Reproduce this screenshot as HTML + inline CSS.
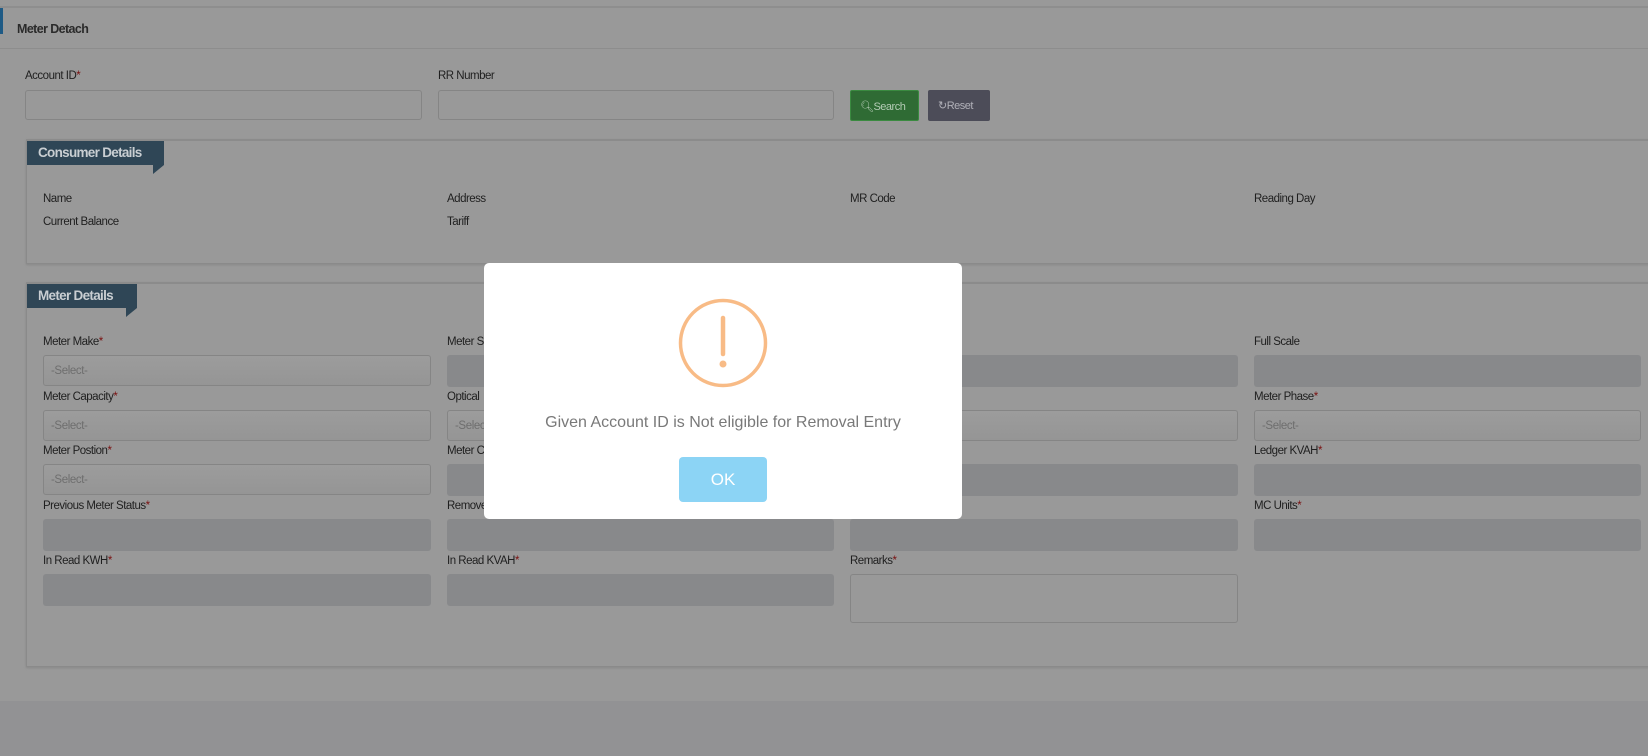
<!DOCTYPE html>
<html><head><meta charset="utf-8"><style>
*{box-sizing:border-box;margin:0;padding:0}
body{width:1648px;height:756px;overflow:hidden;background:#929294;font-family:"Liberation Sans",sans-serif;font-size:12px;color:#1e1e1e;position:relative}
.a{position:absolute}
.lbl{position:absolute;font-size:11.5px;color:#1f1f1f;letter-spacing:-0.5px;margin-top:2px}
.lbl b{color:#7a1010;font-weight:normal}
.in{position:absolute;height:31px;border:1px solid #858585;border-radius:3px;background:#999}
.ro{position:absolute;height:32px;border-radius:3px;background:#88898b}
.sel{position:absolute;height:31px;border:1px solid #858585;border-radius:3px;background:linear-gradient(#9c9c9c,#959595);color:#6e6e6e;font-size:11.5px;letter-spacing:-0.4px;padding:9px 7px}
.tab{position:absolute;background:#2f4656;color:#c9ced2;font-weight:bold;font-size:13.5px;padding:4px 11px;letter-spacing:-0.7px}
</style></head><body>
<div class="a" style="left:0;top:0;width:1648px;height:701px;background:#999"></div>
<div class="a" style="left:0;top:6px;width:1648px;height:2px;background:#8e8e8e"></div>
<div class="a" style="left:0;top:8px;width:3px;height:26px;background:#1e5a85"></div>
<div class="a" style="left:17px;top:22px;font-size:12.5px;font-weight:bold;color:#2a2a2a;letter-spacing:-0.6px">Meter Detach</div>
<div class="a" style="left:0;top:48px;width:1648px;height:1px;background:#8d8d8d"></div>

<div class="lbl" style="left:25px;top:68px">Account ID<b>*</b></div>
<div class="lbl" style="left:438px;top:68px">RR Number</div>
<div class="in" style="left:25px;top:90px;width:397px;height:30px"></div>
<div class="in" style="left:438px;top:90px;width:396px;height:30px"></div>
<div class="a" style="left:850px;top:90px;width:69px;height:31px;background:#2f6b34;border:1px solid #3a8a40;border-radius:2px;color:#b5ccb6;padding:9px 0 0 9px;font-size:11px;letter-spacing:-0.5px">&#x1F50D;&#xFE0E;Search</div>
<div class="a" style="left:928px;top:90px;width:62px;height:31px;background:#4c4c58;border-radius:2px;color:#b0b0b8;padding:9px 0 0 10px;font-size:11px;letter-spacing:-0.5px">↻Reset</div>

<div class="a" style="left:26px;top:139px;width:1630px;height:125px;border:1px solid #8a8a8a;border-top:2px solid #8b8b8b;box-shadow:0 1px 2px #888"></div>
<div class="tab" style="left:27px;top:141px;width:137px;height:24px;padding-top:4px">Consumer Details</div>
<div class="a" style="left:153px;top:165px;width:0;height:0;border-left:11px solid #2f4656;border-bottom:9px solid transparent"></div>
<div class="lbl" style="left:43px;top:191px">Name</div>
<div class="lbl" style="left:447px;top:191px">Address</div>
<div class="lbl" style="left:850px;top:191px">MR Code</div>
<div class="lbl" style="left:1254px;top:191px">Reading Day</div>
<div class="lbl" style="left:43px;top:214px">Current Balance</div>
<div class="lbl" style="left:447px;top:214px">Tariff</div>

<div class="a" style="left:26px;top:282px;width:1630px;height:385px;border:1px solid #8a8a8a;border-top:2px solid #8b8b8b;box-shadow:0 1px 2px #888"></div>
<div class="tab" style="left:27px;top:284px;width:110px;height:24px;padding-top:4px">Meter Details</div>
<div class="a" style="left:126px;top:308px;width:0;height:0;border-left:11px solid #2f4656;border-bottom:9px solid transparent"></div>

<div class="lbl" style="left:43px;top:334px">Meter Make<b>*</b></div>
<div class="lbl" style="left:447px;top:334px">Meter S</div>
<div class="lbl" style="left:1254px;top:334px">Full Scale</div>
<div class="sel" style="left:43px;top:355px;width:388px">-Select-</div>
<div class="ro" style="left:447px;top:355px;width:387px"></div>
<div class="ro" style="left:850px;top:355px;width:388px"></div>
<div class="ro" style="left:1254px;top:355px;width:387px"></div>

<div class="lbl" style="left:43px;top:389px">Meter Capacity<b>*</b></div>
<div class="lbl" style="left:447px;top:389px">Optical</div>
<div class="lbl" style="left:1254px;top:389px">Meter Phase<b>*</b></div>
<div class="sel" style="left:43px;top:410px;width:388px">-Select-</div>
<div class="sel" style="left:447px;top:410px;width:387px">-Select-</div>
<div class="sel" style="left:850px;top:410px;width:388px"></div>
<div class="sel" style="left:1254px;top:410px;width:387px">-Select-</div>

<div class="lbl" style="left:43px;top:443px">Meter Postion<b>*</b></div>
<div class="lbl" style="left:447px;top:443px">Meter C</div>
<div class="lbl" style="left:1254px;top:443px">Ledger KVAH<b>*</b></div>
<div class="sel" style="left:43px;top:464px;width:388px">-Select-</div>
<div class="ro" style="left:447px;top:464px;width:387px"></div>
<div class="ro" style="left:850px;top:464px;width:388px"></div>
<div class="ro" style="left:1254px;top:464px;width:387px"></div>

<div class="lbl" style="left:43px;top:498px">Previous Meter Status<b>*</b></div>
<div class="lbl" style="left:447px;top:498px">Remove</div>
<div class="lbl" style="left:1254px;top:498px">MC Units<b>*</b></div>
<div class="ro" style="left:43px;top:519px;width:388px"></div>
<div class="ro" style="left:447px;top:519px;width:387px"></div>
<div class="ro" style="left:850px;top:519px;width:388px"></div>
<div class="ro" style="left:1254px;top:519px;width:387px"></div>

<div class="lbl" style="left:43px;top:553px">In Read KWH<b>*</b></div>
<div class="lbl" style="left:447px;top:553px">In Read KVAH<b>*</b></div>
<div class="lbl" style="left:850px;top:553px">Remarks<b>*</b></div>
<div class="ro" style="left:43px;top:574px;width:388px"></div>
<div class="ro" style="left:447px;top:574px;width:387px"></div>
<div class="in" style="left:850px;top:574px;width:388px;height:49px"></div>

<div class="a" style="left:484px;top:263px;width:478px;height:256px;background:#fff;border-radius:5px"></div>
<svg class="a" style="left:677px;top:297px" width="92" height="92" viewBox="0 0 92 92">
<circle cx="46" cy="46" r="42.5" fill="none" stroke="#f8bb86" stroke-width="3.5"/>
<line x1="46" y1="21" x2="46" y2="57" stroke="#f8bb86" stroke-width="4.5" stroke-linecap="round"/>
<circle cx="46" cy="67" r="3.5" fill="#f8bb86"/>
</svg>
<div class="a" style="left:484px;top:414px;width:478px;text-align:center;font-size:16px;color:#797979">Given Account ID is Not eligible for Removal Entry</div>
<div class="a" style="left:679px;top:457px;width:88px;height:45px;background:#8cd4f5;border-radius:4px;color:#fff;font-size:17px;text-align:center;line-height:45px">OK</div>
</body></html>
